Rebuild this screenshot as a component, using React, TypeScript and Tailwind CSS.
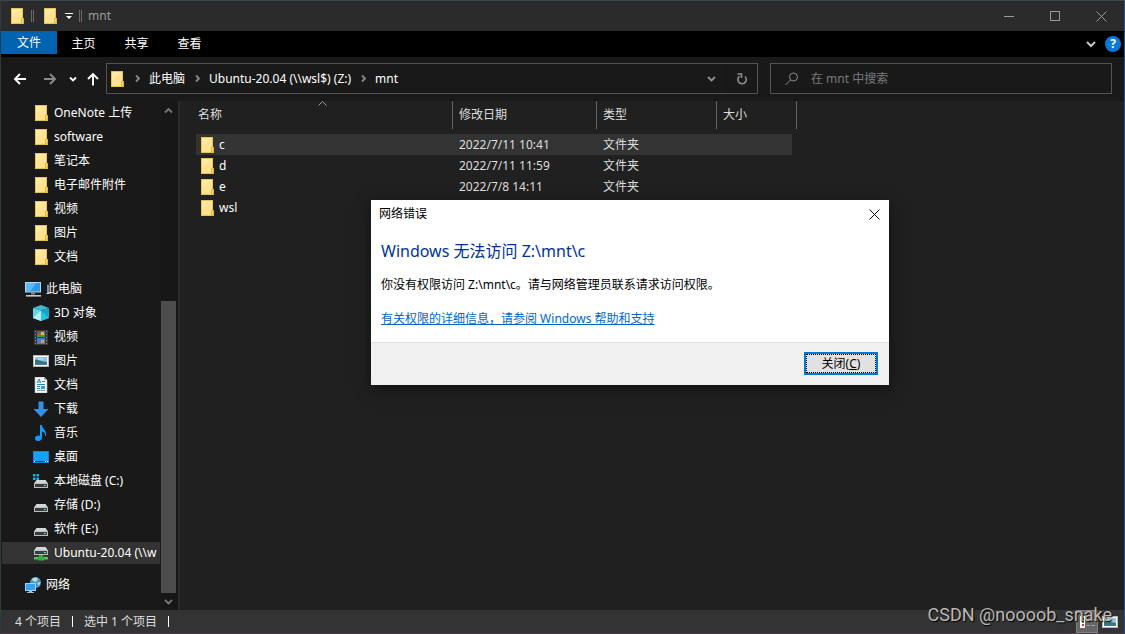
import type { ReactNode } from 'react';

type IconProps = { className?: string };

function FolderIcon({ className = 'w-[14px] h-4' }: IconProps) {
  return (
    <svg viewBox="0 0 14 16" className={`${className} shrink-0`} aria-hidden="true">
      <path d="M0 0H12V10H13V16H0Z" fill="#e9c251" />
      <path d="M1 1H11V15H1Z" fill="#ffe391" />
      <path d="M1 1H11L1 9Z" fill="#ffe9a6" />
      <path d="M10.5 15V10.5H12.5V15Z" fill="#f8d775" stroke="#e0b53c" strokeWidth="1" />
    </svg>
  );
}

function Chevron({ dir }: { dir: 'up' | 'down' | 'right' }) {
  const d = {
    up: 'M1 6.5L4.5 3L8 6.5',
    down: 'M1 3L4.5 6.5L8 3',
    right: 'M3 1.5L6 4.5L3 7.5',
  }[dir];
  return (
    <svg viewBox="0 0 9 9" className="w-[9px] h-[9px] shrink-0" fill="none" stroke="currentColor" strokeWidth="1.8" aria-hidden="true">
      <path d={d} />
    </svg>
  );
}

function Svg16({ children }: { children: ReactNode }) {
  return (
    <svg viewBox="0 0 16 16" className="w-4 h-4 shrink-0" aria-hidden="true">
      {children}
    </svg>
  );
}

function PcIcon() {
  return (
    <Svg16>
      <rect x="0" y="1" width="16" height="10.5" fill="#b9d6e8" />
      <rect x="1" y="2" width="14" height="8.5" fill="#2e9bea" />
      <path d="M1 2H11L5 10.5H1Z" fill="#5cb9f7" />
      <rect x="6" y="11.5" width="4" height="2" fill="#7f8d97" />
      <rect x="1" y="14" width="15" height="1.6" fill="#c5ccd1" />
    </Svg16>
  );
}

function CubeIcon() {
  return (
    <Svg16>
      <path d="M8 0L16 3L8 5.5L0 3Z" fill="#3fb9cf" />
      <path d="M0 3L8 5.5V16L0 13Z" fill="#5fd6e2" />
      <path d="M16 3L8 5.5V16L16 13Z" fill="#12a5cf" />
      <path d="M0 13L8 5.5V16Z" fill="#b5eff3" />
      <path d="M16 13L8 5.5V16Z" fill="#27c4e0" />
    </Svg16>
  );
}

function VideoIcon() {
  return (
    <Svg16>
      <rect x="1" y="1" width="14" height="15" fill="#3a3a3a" />
      <rect x="4" y="2" width="8" height="6" fill="#3768c5" />
      <rect x="4" y="9" width="8" height="6" fill="#3f7fe0" />
      <path d="M4 6L8 3.5L12 5.5V8H4Z" fill="#3c9a52" />
      <rect x="8" y="3" width="3" height="3" fill="#e8b92f" />
      <rect x="5" y="5" width="2" height="2" fill="#d8443b" />
      <rect x="8" y="11" width="3" height="3" fill="#e0a030" />
      <path d="M2.5 2V16M13.5 2V16" stroke="#8a8a8a" strokeWidth="1" strokeDasharray="1 2" />
    </Svg16>
  );
}

function PictureIcon() {
  return (
    <Svg16>
      <rect x="0" y="2" width="16" height="12" fill="#b8b8b8" />
      <rect x="1" y="3" width="14" height="10" fill="#fff" />
      <rect x="2" y="4" width="12" height="8" fill="#8cc3ec" />
      <path d="M2 7C5 6 8 9 14 9V12H2Z" fill="#3c7168" />
      <path d="M2 10.5H14V12H2Z" fill="#3d78b6" />
      <path d="M5 5.5H10V6.5H5Z" fill="#d4e9f8" />
    </Svg16>
  );
}

function DocIcon() {
  return (
    <Svg16>
      <path d="M2 0H11L14 3V16H2Z" fill="#f7f7f7" stroke="#b5b5b5" strokeWidth="0.6" />
      <path d="M11 0V3H14Z" fill="#a9a9a9" />
      <path d="M4 6L6 2L8 6M5 5H7" stroke="#2285cd" fill="none" />
      <path d="M9 4.5H12M4 7.5H12M4 9.5H7M4 11.5H7" stroke="#2285cd" />
      <path d="M4 13.5H12" stroke="#9a9a9a" />
      <rect x="8" y="9" width="4" height="3" fill="#3c9bd8" />
    </Svg16>
  );
}

function DownloadIcon() {
  return (
    <Svg16>
      <path d="M5.5 0.5H10.5V8H15.5L8 16L0.5 8H5.5Z" fill="#3390e5" />
    </Svg16>
  );
}

function MusicIcon() {
  return (
    <Svg16>
      <path d="M7 0H9C9 4 14 5 13 11H12C12.5 8 11 7 9 6.5V12.5C9 17 2 17 2 13.5C2 10.5 5 10 7 11Z" fill="#0f9bff" />
    </Svg16>
  );
}

function DesktopIcon() {
  return (
    <Svg16>
      <rect x="0" y="2" width="16" height="12" fill="#1782d6" />
      <rect x="1" y="3" width="14" height="9" fill="#19a0ff" />
      <path d="M1 12.5H15" stroke="#0b4f88" strokeWidth="1" />
      <path d="M1 12.5H3M12 12.5H15" stroke="#fff" strokeDasharray="1 1" />
    </Svg16>
  );
}

function DriveIcon({ kind }: { kind?: 'system' | 'network' }) {
  const top = kind === 'network' ? 1 : 6;
  return (
    <Svg16>
      <g transform={`translate(0 ${top})`}>
        <path d="M3.5 1H12.5L15 4.5H1Z" fill="#d3d5d8" />
        <rect x="1" y="4" width="14" height="5" fill="#b9bcc0" />
        <rect x="2" y="5" width="12" height="3" fill="#3a3d40" />
        <rect x="11" y="6" width="2" height="1" fill="#4dff5e" />
      </g>
      {kind === 'system' && <path d="M0 1H2.5V3.5H0ZM3.5 1H6V3.5H3.5ZM0 4.5H2.5V7H0ZM3.5 4.5H6V7H3.5Z" fill="#12b4f0" />}
      {kind === 'network' && (
        <>
          <path d="M6 10H10V13H6Z" fill="#2f9e3c" />
          <path d="M1 12H15V14.5H1Z" fill="#4fc353" />
          <path d="M5 11.5H11V15.5H5Z" fill="#38ad43" />
        </>
      )}
    </Svg16>
  );
}

function NetworkIcon() {
  return (
    <Svg16>
      <circle cx="10.5" cy="5.5" r="5.5" fill="#4e92b8" />
      <path d="M7 2C9 0 12 0 13 2L11 5L8 4ZM12 6L15.5 5L14 9Z" fill="#b9dced" />
      <rect x="0" y="6" width="11" height="8" fill="#9bd2f6" />
      <rect x="1" y="7" width="9" height="6" fill="#2fa3f2" />
      <path d="M4 14H7V15H9V16H2V15H4Z" fill="#aebac2" />
    </Svg16>
  );
}

const quickFolders = ['OneNote 上传', 'software', '笔记本', '电子邮件附件', '视频', '图片', '文档'];

const pcItems = [
  { label: '3D 对象', icon: <CubeIcon /> },
  { label: '视频', icon: <VideoIcon /> },
  { label: '图片', icon: <PictureIcon /> },
  { label: '文档', icon: <DocIcon /> },
  { label: '下载', icon: <DownloadIcon /> },
  { label: '音乐', icon: <MusicIcon /> },
  { label: '桌面', icon: <DesktopIcon /> },
  { label: '本地磁盘 (C:)', icon: <DriveIcon kind="system" /> },
  { label: '存储 (D:)', icon: <DriveIcon /> },
  { label: '软件 (E:)', icon: <DriveIcon /> },
  { label: 'Ubuntu-20.04 (\\\\w', icon: <DriveIcon kind="network" />, active: true },
];

const files = [
  { name: 'c', date: '2022/7/11 10:41', type: '文件夹', selected: true },
  { name: 'd', date: '2022/7/11 11:59', type: '文件夹' },
  { name: 'e', date: '2022/7/8 14:11', type: '文件夹' },
  { name: 'wsl', date: '', type: '' },
];

function NavItem({ icon, label, root, active }: { icon: ReactNode; label: string; root?: boolean; active?: boolean }) {
  return (
    <li className="h-6 py-px px-px">
      <a
        href="#"
        className={`flex items-center gap-[5px] h-full whitespace-nowrap ${root ? 'pl-[23px]' : 'pl-[31px]'} ${active ? 'bg-[#333333]' : ''}`}
      >
        {icon}
        <span>{label}</span>
      </a>
    </li>
  );
}

function TitleBar() {
  return (
    <header className="flex items-center h-[30px] bg-[#2b2b2b] text-[#9a9a9a]">
      <div className="flex items-center flex-1 pl-[10px]">
        <FolderIcon />
        <span className="w-[3px] h-3 ml-[6px] border-x border-[#6b6b6b]" />
        <button className="ml-[10px]" aria-label="属性">
          <FolderIcon />
        </button>
        <button className="ml-[7px] text-white" aria-label="自定义快速访问工具栏">
          <svg viewBox="0 0 8 8" className="w-2 h-2" fill="currentColor">
            <path d="M0 1H8V2H0ZM1 4H7L4 7Z" />
          </svg>
        </button>
        <span className="w-[3px] h-3 ml-[6px] border-x border-[#6b6b6b]" />
        <h1 className="ml-[6px]">mnt</h1>
      </div>
      <button className="flex items-center justify-center w-[46px] h-full" aria-label="最小化">
        <span className="w-[10px] h-px bg-[#9a9a9a]" />
      </button>
      <button className="flex items-center justify-center w-[46px] h-full" aria-label="最大化">
        <span className="w-[10px] h-[10px] border border-[#9a9a9a]" />
      </button>
      <button className="flex items-center justify-center w-[46px] h-full" aria-label="关闭窗口">
        <svg viewBox="0 0 11 11" className="w-[11px] h-[11px]" stroke="currentColor">
          <path d="M0.5 0.5L10.5 10.5M10.5 0.5L0.5 10.5" />
        </svg>
      </button>
    </header>
  );
}

function Ribbon() {
  return (
    <nav className="flex items-start h-[26px] bg-black text-white">
      <button className="w-14 h-[23px] bg-[#0063b1]">文件</button>
      <button className="w-[53px] h-[26px]">主页</button>
      <button className="w-[53px] h-[26px]">共享</button>
      <button className="w-[53px] h-[26px]">查看</button>
      <div className="flex items-center gap-[9px] h-[26px] ml-auto pr-[3px]">
        <button className="text-[#c8c8c8]" aria-label="展开功能区">
          <svg viewBox="0 0 10 8" className="w-[10px] h-2" fill="none" stroke="currentColor" strokeWidth="2">
            <path d="M1 2L5 6L9 2" />
          </svg>
        </button>
        <button className="flex items-center justify-center w-4 h-4 rounded-full bg-[#0a78d7] text-[12px] leading-4 font-bold" aria-label="帮助">
          ?
        </button>
      </div>
    </nav>
  );
}

function Crumb({ children }: { children: ReactNode }) {
  return (
    <>
      <span className="flex justify-center w-6 shrink-0 text-[#8a8a8a]">
        <Chevron dir="right" />
      </span>
      <button className="whitespace-nowrap">{children}</button>
    </>
  );
}

function AddressBar() {
  return (
    <div className="flex items-start h-11 pt-[6px] px-3 text-white">
      <div className="flex items-center h-[31px]">
        <button aria-label="后退">
          <svg viewBox="0 0 14 14" className="w-[14px] h-[14px]" fill="none" stroke="currentColor" strokeWidth="1.9">
            <path d="M13 7H2M7 2L2 7L7 12" />
          </svg>
        </button>
        <button className="ml-4 text-[#8a8a8a]" aria-label="前进">
          <svg viewBox="0 0 14 14" className="w-[14px] h-[14px]" fill="none" stroke="currentColor" strokeWidth="1.9">
            <path d="M1 7H12M7 2L12 7L7 12" />
          </svg>
        </button>
        <button className="ml-3" aria-label="最近浏览的位置">
          <svg viewBox="0 0 8 8" className="w-2 h-2" fill="none" stroke="currentColor" strokeWidth="1.8">
            <path d="M1 2.5L4 5.5L7 2.5" />
          </svg>
        </button>
        <button className="ml-[9px]" aria-label="上移">
          <svg viewBox="0 0 14 14" className="w-[14px] h-[14px]" fill="none" stroke="currentColor" strokeWidth="1.9">
            <path d="M7 13.5V2M2 7L7 2L12 7" />
          </svg>
        </button>
      </div>
      <div className="flex items-center flex-1 h-[31px] ml-[6px] pl-1 border border-[#535353]">
        <FolderIcon />
        <Crumb>此电脑</Crumb>
        <Crumb>Ubuntu-20.04 (\\wsl$) (Z:)</Crumb>
        <Crumb>mnt</Crumb>
        <button className="flex items-center justify-center w-[29px] h-full ml-auto text-[#8f8f8f]" aria-label="以前的位置">
          <Chevron dir="down" />
        </button>
        <button className="flex items-center justify-center w-[31px] h-full border-l border-[#141414] text-[#8f8f8f]" aria-label="刷新">
          <svg viewBox="0 0 12 12" className="w-3 h-3" fill="none" stroke="currentColor" strokeWidth="1.6">
            <path d="M3.5 3.2A4.2 4.2 0 1 0 9 3.5" />
            <path d="M1.5 1H5.5V5" />
          </svg>
        </button>
      </div>
      <label className="flex items-center w-[342px] h-[31px] ml-3 pl-[14px] gap-3 border border-[#535353] text-[#8a8a8a]">
        <svg viewBox="0 0 14 14" className="w-[14px] h-[14px] shrink-0" fill="none" stroke="currentColor">
          <circle cx="8.5" cy="5" r="4" />
          <path d="M5.5 8L0.5 13" />
        </svg>
        <input type="text" placeholder="在 mnt 中搜索" aria-label="搜索" className="flex-1 min-w-0 outline-none bg-transparent placeholder:text-[#7a7a7a]" />
      </label>
    </div>
  );
}

function Sidebar() {
  return (
    <aside className="flex w-[177px] shrink-0 text-white">
      <div className="flex-1 min-w-0">
        <ul>
          {quickFolders.map((f) => (
            <NavItem key={f} icon={<span className="flex justify-end w-4"><FolderIcon /></span>} label={f} />
          ))}
        </ul>
        <ul className="mt-2">
          <NavItem root icon={<PcIcon />} label="此电脑" />
          {pcItems.map((item, i) => (
            <NavItem key={i} {...item} />
          ))}
        </ul>
        <ul className="mt-2">
          <NavItem root icon={<NetworkIcon />} label="网络" />
        </ul>
      </div>
      {/* Scrollbar */}
      <div className="flex flex-col items-center w-[17px] pr-[2px] bg-[#171717] text-[#777777]">
        <div className="flex items-center h-[18px]">
          <Chevron dir="up" />
        </div>
        <div className="flex-1 w-full pt-[182px]">
          <div className="h-full bg-[#4d4d4d]" />
        </div>
        <div className="flex items-center h-[17px]">
          <Chevron dir="down" />
        </div>
      </div>
    </aside>
  );
}

function FileList() {
  const th = 'h-7 pb-px font-normal text-left border-r border-[#636363]';
  return (
    <main className="flex-1 min-w-0 pl-4 bg-[#202020] border-l-2 border-[#2b2b2b]">
      <table className="table-fixed w-[601px] border-separate border-spacing-0 text-[#dedede]">
        <colgroup>
          <col className="w-[257px]" />
          <col className="w-[144px]" />
          <col className="w-[120px]" />
          <col className="w-[80px]" />
        </colgroup>
        <thead>
          <tr>
            <th className={`${th} relative pl-[2px]`}>
              名称
              <svg viewBox="0 0 9 5" className="absolute top-0 left-[122px] w-[9px] h-[5px]" fill="none" stroke="#a0a0a0">
                <path d="M0.5 4.5L4.5 0.5L8.5 4.5" />
              </svg>
            </th>
            <th className={`${th} pl-[6px]`}>修改日期</th>
            <th className={`${th} pl-[6px]`}>类型</th>
            <th className={`${th} pl-[6px]`}>大小</th>
          </tr>
        </thead>
        <tbody>
          <tr className="h-[5px]">
            <td colSpan={4} />
          </tr>
          {files.map((f) => (
            <tr key={f.name} className={`h-[21px] ${f.selected ? 'bg-[#333333]' : ''}`}>
              <td className="pl-[5px]">
                <div className="flex items-center gap-1 text-white">
                  <FolderIcon />
                  <span>{f.name}</span>
                </div>
              </td>
              <td className="pl-[6px]">{f.date}</td>
              <td className="pl-[6px]">{f.type}</td>
              <td className="border-r-[5px] border-[#202020]" />
            </tr>
          ))}
        </tbody>
      </table>
    </main>
  );
}

function ErrorDialog() {
  return (
    <div
      role="alertdialog"
      aria-labelledby="dialog-title"
      className="absolute left-[370px] top-[199px] w-[518px] bg-white text-black shadow-[0_4px_14px_rgba(0,0,0,0.5)]"
    >
      <div className="flex items-center justify-between h-7 pl-2 pr-[9px]">
        <span>网络错误</span>
        <button aria-label="关闭对话框">
          <svg viewBox="0 0 11 11" className="w-[11px] h-[11px]" stroke="#000">
            <path d="M0.5 0.5L10.5 10.5M10.5 0.5L0.5 10.5" />
          </svg>
        </button>
      </div>
      <div className="h-[114px] px-[10px] pt-[11px]">
        <h2 id="dialog-title" className="text-[16px] leading-6 text-[#003399]">Windows 无法访问 Z:\mnt\c</h2>
        <p className="mt-[13px]">你没有权限访问 Z:\mnt\c。请与网络管理员联系请求访问权限。</p>
        <a href="#" className="inline-block mt-4 text-[#0066cc] underline">有关权限的详细信息，请参阅 Windows 帮助和支持</a>
      </div>
      <div className="flex justify-end h-[43px] pt-[9px] pr-[11px] bg-[#f0f0f0] border-t border-[#dfdfdf]">
        <button className="w-[74px] h-[23px] border-2 border-[#0078d7] bg-[#e1e1e1]">
          <span className="flex items-center justify-center h-full border border-dotted border-black">
            关闭(<u>C</u>)
          </span>
        </button>
      </div>
    </div>
  );
}

function StatusBar() {
  return (
    <footer className="flex items-center h-[23px] pl-[14px] pr-[6px] bg-[#333333] text-[#dedede]">
      <span>4 个项目</span>
      <span className="w-px h-[11px] mx-[11px] bg-white" />
      <span>选中 1 个项目</span>
      <span className="w-px h-[11px] mx-[11px] bg-white" />
      <button className="flex items-center w-[22px] h-full ml-auto pl-[3px] bg-[#666666] border border-[#808080]" aria-label="详细信息">
        <svg viewBox="0 0 16 14" className="w-4 h-[14px]">
          <rect x="0" y="1" width="5" height="12" fill="#fff" />
          <path d="M2 3H4V5H2Z" fill="#2f72c4" />
          <path d="M2 6H4V8H2Z" fill="#3c9a52" />
          <path d="M2 9H4V11H2Z" fill="#c43a3a" />
          <path d="M6 4.5H15M6 10.5H15" stroke="#9a9a9a" strokeDasharray="4 1" />
        </svg>
      </button>
      <button className="ml-1" aria-label="大缩略图">
        <PictureIcon />
      </button>
    </footer>
  );
}

export default function App() {
  return (
    <div className="relative flex flex-col min-h-screen bg-[#191919] border-t border-l border-b border-r border-t-[#3d474e] border-l-[#2f3b42] border-b-[#4a3b47] border-r-[#1d5291] text-[12px] leading-[18px] font-['Noto_Sans','Noto_Sans_CJK_SC',sans-serif]">
      <TitleBar />
      <Ribbon />
      <AddressBar />
      <div className="flex flex-1">
        <Sidebar />
        <FileList />
      </div>
      <StatusBar />
      <ErrorDialog />
      <div className="absolute right-3 bottom-[6px] text-[18px] leading-6 text-[#b9b9b9] [text-shadow:1px_1px_1px_#000] font-[Roboto,sans-serif] pointer-events-none">
        CSDN @noooob_snake
      </div>
    </div>
  );
}
